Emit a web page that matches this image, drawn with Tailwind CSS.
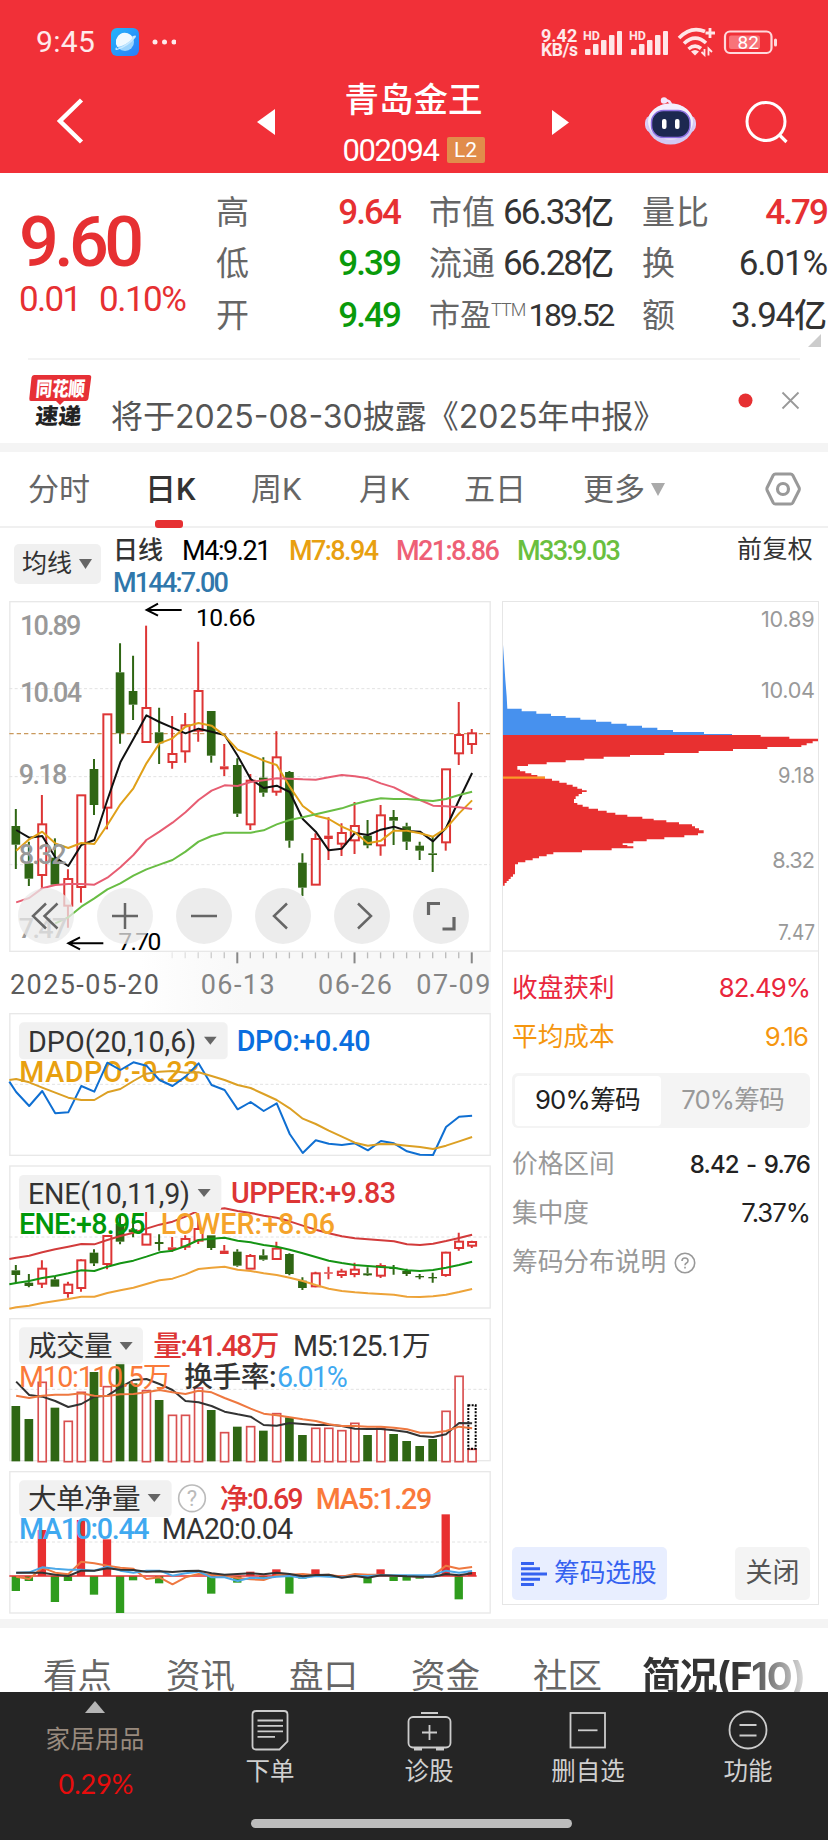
<!DOCTYPE html>
<html lang="zh-CN">

<head>
  <meta charset="UTF-8">
  <meta name="viewport" content="width=device-width, initial-scale=1.0">
  <title>青岛金王 002094</title>
  <script src="https://cdn.jsdelivr.net/npm/@tailwindcss/browser@4"></script>
</head>

<body class="w-[828px] h-[1840px] overflow-hidden bg-white font-['Roboto','Noto_Sans_CJK_SC',sans-serif] text-[#333]">
  <div class="flex flex-col w-[828px] h-[1840px]">

    <!-- Header -->
    <header class="h-[173px] shrink-0 bg-[#f13038] text-white">
      <!-- Status bar -->
      <div class="h-[83px] flex items-center pl-[36px] pr-[51px]">
        <span class="text-[30px] leading-none tracking-[0.300px] text-white/90 w-[75px]">9:45</span>
        <svg class="w-7 h-7" viewBox="0 0 28 28">
          <defs>
            <linearGradient id="app" x1="0" y1="0" x2="1" y2="1">
              <stop offset="0" stop-color="#25b5fa" />
              <stop offset="1" stop-color="#2a7dfa" />
            </linearGradient>
          </defs>
          <rect width="28" height="28" rx="6" fill="url(#app)" />
          <circle cx="14" cy="14" r="9" fill="#9bd4fd" />
          <path d="M6.500 19A9 9 0 1 1 22 10Q16 17 6.500 19Z" fill="#eef9ff" />
          <path d="M21 8.500Q26.500 6 24.500 9.500Q17 19 6 22Q3 22.500 5.500 18.500Q4.500 21.500 8 20Q17 16 22 9.500Z" fill="#c7e9ff" />
        </svg>
        <svg class="w-6 h-2 ml-[13px]" viewBox="0 0 24 8" fill="#fff" fill-opacity=".9">
          <circle cx="3" cy="4" r="2.500" /><circle cx="12.500" cy="4" r="2.500" /><circle cx="22" cy="4" r="2.500" />
        </svg>
        <div class="ml-auto flex items-center text-white/90">
          <div class="w-[42px] font-bold text-[18px] leading-[15px] pt-[3px]">
            <div>9.42</div>
            <div class="text-[17.5px] tracking-[-0.300px]">KB/s</div>
          </div>
          <svg class="w-[94px] h-[28px]" viewBox="583 27 94 28" fill="#ffe6e8">
            <text x="583" y="38.500" font-size="12.500" font-weight="700">HD</text>
            <text x="629" y="38.500" font-size="12.500" font-weight="700">HD</text>
            <g id="signal">
              <rect x="585" y="48" width="5.500" height="6" rx="1" />
              <rect x="593" y="43" width="5.500" height="11" rx="1" />
              <rect x="601" y="39" width="5.500" height="15" rx="1" />
              <rect x="609" y="34" width="5.500" height="20" rx="1" />
              <rect x="617" y="30" width="5" height="24" rx="1" />
            </g>
            <use href="#signal" x="46" />
          </svg>
          <svg class="w-[42px] h-[30px]" viewBox="677 27 42 30" fill="none" stroke="#ffe6e8" stroke-width="3.600">
            <path d="M679 38Q691 25.500 705 31.500" />
            <path d="M684 43.500Q695 33 706 43" />
            <path d="M688.500 49Q695 43.500 701 48.500" />
            <path d="M691 51.500Q695 48.500 699 51.500L695 55.500Z" fill="#ffe6e8" stroke="none" />
            <path d="M710 28V38M705.500 33H715" stroke-width="2.800" />
            <path d="M704.500 49V55L701.500 52M708.500 55.500V48.500L712 52" stroke-width="1.800" />
          </svg>
          <svg class="w-[58px] h-[28px]" viewBox="719 27.500 58 28">
            <rect x="725" y="31" width="46.500" height="21.500" rx="5" fill="none" stroke="#ffd9dc" stroke-width="2.200" />
            <rect x="729" y="35" width="31" height="13.500" rx="2" fill="#f87379" />
            <rect x="774" y="38" width="3" height="8" rx="1.500" fill="#ffd9dc" />
            <text x="737.500" y="48.500" font-size="19" fill="#fff">82</text>
          </svg>
        </div>
      </div>
      <!-- Title bar -->
      <div class="h-[90px] flex items-start">
        <svg class="w-[257px] h-[90px]" viewBox="0 83 257 90" fill="none" stroke="#fff" stroke-width="4.500">
          <path d="M81.500 100L60 121L81.500 142" />
        </svg>
        <svg class="w-[18px] h-[26px] mt-[26px]" viewBox="0 0 18 26" fill="#fff"><path d="M0 13L18 0V26Z" /></svg>
        <div class="flex-1 flex flex-col items-center">
          <div class="text-[34.500px] leading-[36px] font-medium mt-[-1px]">青岛金王</div>
          <div class="flex items-center mt-[16px]">
            <span class="text-[31px] leading-[30px] pt-[2px] tracking-[-1.400px] w-[104px]">002094</span>
            <span class="w-[38px] h-[26px] bg-[#e18c4b] rounded-[2px] text-[21px] leading-[27px] text-center">L2</span>
          </div>
        </div>
        <svg class="w-[17px] h-[25px] mt-[27px]" viewBox="0 0 17 25" fill="#fff"><path d="M0 0L17 12.500L0 25Z" /></svg>
        <svg class="w-[259px] h-[90px]" viewBox="569 83 259 90">
          <path d="M664 100Q671 100 671 106" fill="none" stroke="#f3e6fb" stroke-width="2.500" />
          <circle cx="664" cy="100.500" r="3.200" fill="#f3e6fb" />
          <rect x="645" y="115" width="51" height="18" rx="8" fill="#dccdf5" />
          <ellipse cx="670.500" cy="124" rx="23.500" ry="20.500" fill="#d3c9f3" />
          <ellipse cx="670.500" cy="121.500" rx="22.500" ry="18" fill="#f4effc" />
          <rect x="651.500" y="110.500" width="38.500" height="27" rx="12" fill="#1c2850" stroke="#8b6fe0" stroke-width="1.500" />
          <rect x="662" y="119" width="4.500" height="10" rx="2" fill="#fff" />
          <rect x="675" y="119" width="4.500" height="10" rx="2" fill="#fff" />
          <circle cx="766" cy="121.500" r="19" fill="none" stroke="#fff" stroke-width="3" />
          <path d="M779.500 135L786.500 142" stroke="#fff" stroke-width="3.200" />
        </svg>
      </div>
    </header>

    <!-- Quote -->
    <section class="h-[185px] shrink-0 flex pt-[13.500px]">
      <div class="w-[216px] pl-[19px] text-[#e63032]">
        <div class="text-[70px] leading-[70px] font-medium tracking-[-4.600px] pt-[20px]">9.60</div>
        <div class="flex text-[35px] leading-[36px] tracking-[-1.700px] mt-[5px]">
          <span class="w-[80px]">0.01</span><span class="tracking-[-1.500px]">0.10%</span>
        </div>
      </div>
      <div class="w-[184px] mr-[1px] text-[33px] leading-[51.500px] text-[#666]">
        <div class="flex justify-between">高<span class="text-[35px] tracking-[-1.900px] font-medium text-[#e63032]">9.64</span></div>
        <div class="flex justify-between">低<span class="text-[35px] tracking-[-1.900px] font-medium text-[#0a9a0a]">9.39</span></div>
        <div class="flex justify-between">开<span class="text-[35px] tracking-[-1.900px] font-medium text-[#0a9a0a]">9.49</span></div>
      </div>
      <div class="w-[185px] ml-[28px] text-[33px] leading-[51.500px] text-[#666] whitespace-nowrap">
        <div class="flex justify-between">市值<span class="flex text-[#333]"><span class="text-[35px] tracking-[-2px]">66.33</span><span class="font-medium">亿</span></span></div>
        <div class="flex justify-between">流通<span class="flex text-[#333]"><span class="text-[35px] tracking-[-2px]">66.28</span><span class="font-medium">亿</span></span></div>
        <div class="flex justify-between text-[31px]"><span class="flex">市盈<span class="text-[18px] leading-[39px] tracking-[-1px] font-light">TTM</span></span><span class="text-[32px] tracking-[-2.300px] pr-[1px] text-[#333]">189.52</span></div>
      </div>
      <div class="w-[185px] ml-[28px] mr-[1px] text-[33px] leading-[51.500px] text-[#666] whitespace-nowrap">
        <div class="flex justify-between"><span class="tracking-[1px]">量比</span><span class="text-[35px] tracking-[-1.900px] font-medium text-[#e63032]">4.79</span></div>
        <div class="flex justify-between">换<span class="text-[35px] tracking-[-1.100px] text-[#333]">6.01%</span></div>
        <div class="flex justify-between">额<span class="flex text-[#333]"><span class="text-[35px] tracking-[-1.300px]">3.94</span><span class="font-medium">亿</span></span></div>
        <svg class="w-[13px] h-[13px] ml-auto mr-[6px] mt-[-7px]" viewBox="0 0 13 13" fill="#ccc"><path d="M13 0V13H0Z" /></svg>
      </div>
    </section>

    <!-- Notice -->
    <section class="h-[85px] shrink-0 mx-[28px] border-t-2 border-[#f3f3f3] flex">
      <svg class="w-[66px] h-[60px] mt-[10px]" viewBox="28 370 66 60">
        <path d="M34 375H89Q91.500 375 91.200 377.500L88.500 398Q88 401 85.500 401H64L60 405L56 401H31Q29 401 29.300 398.500L31.500 377.500Q32 375 34 375Z" fill="#e63036" />
        <text x="36" y="396" font-size="20" font-weight="900" fill="#fff" textLength="49" lengthAdjust="spacingAndGlyphs" transform="skewX(-5) translate(34 0)">同花顺</text>
        <text x="36" y="424.500" font-size="22" font-weight="900" fill="#222" textLength="46" lengthAdjust="spacingAndGlyphs" transform="skewX(-5) translate(36 0)">速递</text>
      </svg>
      <div class="flex-1 pl-[17px] pt-[34px] text-[32px] leading-[46px] text-[#555] whitespace-nowrap font-['Inter','Noto_Sans_CJK_SC',sans-serif]">将于2025-08-30披露《2025年中报》</div>
      <svg class="w-[65px] h-[40px] mt-[20px]" viewBox="735 380 65 40">
        <circle cx="745.500" cy="400.500" r="7" fill="#e63032" />
        <path d="M782.500 392.500L798.500 408.500M798.500 392.500L782.500 408.500" stroke="#999" stroke-width="1.800" />
      </svg>
    </section>
    <div class="h-[9px] shrink-0 bg-[#f4f4f4]"></div>

    <!-- Period tabs -->
    <nav class="h-[76px] shrink-0 border-b-2 border-[#f0f0f0] flex items-start pt-[15px] pl-[28px] text-[31px] leading-[46px] text-[#666] whitespace-nowrap">
      <span class="w-[117px]">分时</span>
      <span class="w-[106px] font-medium text-[#333]">
        日K
        <span class="block w-[28px] h-[8px] mt-[7px] ml-[10px] rounded-[3px] bg-[#e63032]"></span>
      </span>
      <span class="w-[108px]">周K</span>
      <span class="w-[105px]">月K</span>
      <span class="w-[119px]">五日</span>
      <span class="w-[68px]">更多</span>
      <svg class="w-[14px] h-[13px] mt-[16px]" viewBox="0 0 14 13" fill="#aaa"><path d="M0 0H14L7 13Z" /></svg>
      <svg class="w-[36px] h-[34px] ml-[100px] mt-[5px]" viewBox="765 472 36 34" fill="none" stroke="#999" stroke-width="3">
        <path d="M775.500 474H790.500Q792 474 792.800 475.300L799 487.500Q799.700 489 799 490.500L792.800 502.700Q792 504 790.500 504H775.500Q774 504 773.200 502.700L767.200 490.500Q766.500 489 767.200 487.500L773.200 475.300Q774 474 775.500 474Z" />
        <circle cx="783" cy="489" r="5.500" stroke-width="3.200" />
      </svg>
    </nav>

    <!-- Moving averages -->
    <section class="h-[74px] shrink-0 flex pl-[14px] pr-[15px]">
      <div class="w-[87px] h-[40px] mt-[16px] rounded-[5px] bg-[#f0f0f0] flex items-center pl-[8px] text-[25px]">
        均线<svg class="w-[13px] h-[10px] ml-[7px]" viewBox="0 0 13 10" fill="#666"><path d="M0 0H13L6.500 10Z" /></svg>
      </div>
      <div class="flex-1 pl-[12px] pt-[7px] text-[27px] leading-[32px] tracking-[-1.600px] font-medium whitespace-nowrap">
        <div class="flex">
          <span class="w-[69px] text-[25px] tracking-normal">日线</span>
          <span class="w-[107px] text-black font-normal tracking-[-1.400px]">M4:9.21</span>
          <span class="w-[107px] text-[#e8a010]">M7:8.94</span>
          <span class="w-[121px] text-[#ee6076]">M21:8.86</span>
          <span class="text-[#6abf3f]">M33:9.03</span>
        </div>
        <div class="text-[#2f77ab] tracking-[-1.800px]">M144:7.00</div>
      </div>
      <div class="text-[25px] leading-[32px] pt-[6px] tracking-[0.300px]">前复权</div>
    </section>

    <!-- Charts -->
    <section class="h-[1017px] shrink-0 flex">
      <div class="w-[500px] flex flex-col relative">

        <!-- K line -->
        <svg class="w-[500px] h-[411px] overflow-visible" viewBox="0 36 1500 1233" font-size="81">
          <defs>
            <linearGradient id="fade" x1="0" x2="1">
              <stop offset="0" stop-color="#f6f6f6" stop-opacity="0" />
              <stop offset=".3" stop-color="#f8f8f8" />
            </linearGradient>
          </defs>
          <rect x="420" y="1086" width="1052" height="183" fill="url(#fade)" />
          <rect x="29.500" y="35" width="1441" height="1049" fill="#fff" stroke="#e8e8e8" stroke-width="4" />
          <path d="M28 296H1470M28 560H1470M28 824H1470" stroke="#e2e2e2" stroke-width="3" stroke-dasharray="9 7" />
          <path d="M28 431H1470" stroke="#c9995c" stroke-width="3.500" stroke-dasharray="13 9" />
          <g id="k-candles"></g>
          <g id="k-lines"></g>
          <g id="k-ticks"></g>
          <g fill="#999" font-weight="500">
            <text x="60" y="134" textLength="184">10.89</text>
            <text x="60" y="336" textLength="186">10.04</text>
            <text x="56" y="581" textLength="146">9.18</text>
            <text x="56" y="821" textLength="144">8.32</text>
            <text x="56" y="1044" textLength="146">7.47</text>
          </g>
          <g fill="none" stroke="#000" stroke-width="6">
            <path d="M545 60H442M474 41L440 60L474 77" />
            <path d="M310 1060H207M240 1042L205 1060L240 1078" />
          </g>
          <text x="588" y="107" font-size="74" textLength="179">10.66</text>
          <text x="355" y="1080" font-size="74" textLength="129">7.70</text>
          <text x="30" y="1211" fill="#5c5c5c" textLength="447">2025-05-20</text>
          <g fill="#858585">
            <text x="602" y="1211" textLength="222">06-13</text>
            <text x="954" y="1211" textLength="222">06-26</text>
            <text x="1249" y="1211" textLength="222">07-09</text>
          </g>
        </svg>

        <!-- Chart controls -->
        <div class="absolute left-[17.500px] top-[285.500px] flex gap-[23px]">
          <button class="w-14 h-14 rounded-full bg-[#eaeaea]/75 flex items-center justify-center">
            <svg class="w-8 h-8" viewBox="0 0 32 32" fill="none" stroke="#666" stroke-width="2.500"><path d="M16 3.500L3 16L16 28.500M27.500 3.500L14.500 16L27.500 28.500" /></svg>
          </button>
          <button class="w-14 h-14 rounded-full bg-[#eaeaea]/75 flex items-center justify-center">
            <svg class="w-8 h-8" viewBox="0 0 32 32" stroke="#666" stroke-width="2.500"><path d="M3 16H29M16 3V29" /></svg>
          </button>
          <button class="w-14 h-14 rounded-full bg-[#eaeaea]/90 flex items-center justify-center">
            <svg class="w-8 h-8" viewBox="0 0 32 32" stroke="#666" stroke-width="2.500"><path d="M3 16H29" /></svg>
          </button>
          <button class="w-14 h-14 rounded-full bg-[#eaeaea]/90 flex items-center justify-center">
            <svg class="w-8 h-8" viewBox="0 0 32 32" fill="none" stroke="#666" stroke-width="2.500"><path d="M20 3.500L7 16L20 28.500" /></svg>
          </button>
          <button class="w-14 h-14 rounded-full bg-[#eaeaea]/90 flex items-center justify-center">
            <svg class="w-8 h-8" viewBox="0 0 32 32" fill="none" stroke="#666" stroke-width="2.500"><path d="M12 3.500L25 16L12 28.500" /></svg>
          </button>
          <button class="w-14 h-14 rounded-full bg-[#eaeaea]/90 flex items-center justify-center">
            <svg class="w-8 h-8" viewBox="0 0 32 32" fill="none" stroke="#666" stroke-width="3.200"><path d="M15 3.500H3.500V15M29 17V29H17.500" /></svg>
          </button>
        </div>

        <!-- DPO -->
        <svg class="w-[500px] h-[152px]" viewBox="0 39 1500 456" font-size="86" font-weight="500">
          <rect x="29.500" y="41" width="1441" height="425" fill="none" stroke="#e8e8e8" stroke-width="4" />
          <path d="M28 253H1470" stroke="#e2e2e2" stroke-width="3" stroke-dasharray="9 7" />
          <text x="58" y="245" fill="#e8a010" textLength="541">MADPO:-0.23</text>
          <g id="dpo-lines"></g>
          <rect x="57" y="67" width="626" height="111" rx="14" fill="#f1f1f1" />
          <text x="84" y="155" fill="#333" font-weight="400" textLength="505">DPO(20,10,6)</text>
          <path d="M612 110H650L631 134Z" fill="#666" />
          <text x="710" y="153" fill="#0a6ede" textLength="402">DPO:+0.40</text>
        </svg>

        <!-- ENE -->
        <svg class="w-[500px] h-[153px]" viewBox="0 495 1500 459" font-size="86" font-weight="500">
          <rect x="29.500" y="498" width="1441" height="426" fill="none" stroke="#e8e8e8" stroke-width="4" />
          <path d="M28 711H1470" stroke="#e2e2e2" stroke-width="3" stroke-dasharray="9 7" />
          <g id="ene-candles"></g>
          <g id="ene-lines"></g>
          <rect x="57" y="525" width="607" height="111" rx="14" fill="#f1f1f1" />
          <text x="84" y="612" fill="#333" font-weight="400" textLength="486">ENE(10,11,9)</text>
          <path d="M593 567H632L612 591Z" fill="#666" />
          <text x="693" y="609" fill="#dd3535" textLength="495">UPPER:+9.83</text>
          <text x="57" y="702" fill="#00980a" textLength="380">ENE:+8.95</text>
          <text x="482" y="702" fill="#f5a32a" textLength="523">LOWER:+8.06</text>
        </svg>

        <!-- Volume -->
        <svg class="w-[500px] h-[153px]" viewBox="0 54 1500 459" font-size="86" font-weight="500">
          <rect x="29.500" y="56" width="1441" height="426" fill="none" stroke="#e8e8e8" stroke-width="4" />
          <path d="M28 268H1470" stroke="#e2e2e2" stroke-width="3" stroke-dasharray="9 7" />
          <g id="vol-bars"></g>
          <g id="vol-lines"></g>
          <rect x="57" y="82" width="372" height="111" rx="14" fill="#f1f1f1" fill-opacity=".95" />
          <text x="84" y="169" fill="#333" font-weight="400" textLength="254">成交量</text>
          <path d="M359 126H398L378 150Z" fill="#666" />
          <text x="460" y="169" fill="#dd3535" textLength="378">量:41.48万</text>
          <text x="879" y="169" fill="#333" font-weight="400" textLength="413">M5:125.1万</text>
          <text x="57" y="260" fill="#fa7a3a" font-weight="400" textLength="457">M10:110.5万</text>
          <text x="553" y="260" fill="#333" textLength="277">换手率:</text>
          <text x="831" y="260" fill="#3fa9f0" font-weight="400" textLength="212">6.01%</text>
        </svg>

        <!-- Net large orders -->
        <svg class="w-[500px] h-[148px]" viewBox="0 513 1500 444" font-size="86" font-weight="500">
          <rect x="29.500" y="515" width="1441" height="424" fill="none" stroke="#e8e8e8" stroke-width="4" />
          <path d="M28 726H1470" stroke="#e2e2e2" stroke-width="3" stroke-dasharray="9 7" />
          <g id="net-bars"></g>
          <path d="M28 828H1430" stroke="#e63032" stroke-width="5" />
          <g id="net-lines"></g>
          <rect x="57" y="541" width="458" height="110" rx="14" fill="#f1f1f1" />
          <text x="84" y="627" fill="#333" font-weight="400" textLength="338">大单净量</text>
          <path d="M443 582H482L463 606Z" fill="#666" />
          <circle cx="576" cy="595" r="40" fill="none" stroke="#bbb" stroke-width="5" />
          <text x="576" y="619" font-size="66" font-weight="400" fill="#bbb" text-anchor="middle">?</text>
          <text x="659" y="626" fill="#dd3535" textLength="252">净:0.69</text>
          <text x="947" y="626" fill="#fa7a3a" textLength="350">MA5:1.29</text>
          <text x="57" y="717" fill="#3fa9f0" textLength="392">MA10:0.44</text>
          <text x="485" y="717" fill="#333" font-weight="400" textLength="394">MA20:0.04</text>
        </svg>
      </div>

      <!-- Chip distribution -->
      <div class="w-[317px] h-[1004px] ml-[2px] mt-[-1px] border border-[#e6e6e6] flex flex-col font-['Inter','Noto_Sans_CJK_SC',sans-serif] text-[25.700px]">
        <svg class="w-[315px] h-[348px] shrink-0" viewBox="39 37 945 1044">
          <g id="chips"></g>
          <g font-size="65" fill="#999">
            <text x="813" y="113" textLength="161">10.89</text>
            <text x="813" y="325" textLength="162">10.04</text>
            <text x="864" y="581" textLength="110" lengthAdjust="spacingAndGlyphs">9.18</text>
            <text x="847" y="836" textLength="128">8.32</text>
            <text x="864" y="1050" textLength="111" lengthAdjust="spacingAndGlyphs">7.47</text>
          </g>
        </svg>
        <div class="flex-1 border-t-2 border-[#f1f1f1] pl-[9px] pr-[8px] flex flex-col text-[#999]">
          <div class="h-[49px] mt-[12px] flex items-center justify-between text-[#e9263c]">收盘获利<span class="tracking-[-0.900px]">82.49%</span></div>
          <div class="h-[49px] flex items-center justify-between text-[#f5960f]">平均成本<span class="tracking-[-0.900px] pr-[2px]">9.16</span></div>
          <div class="h-[55px] mt-[11px] shrink-0 rounded-[6px] bg-[#f4f4f4] p-[2.500px] flex items-center">
            <span class="w-[146px] h-[50px] rounded-[4px] bg-white text-[#222] flex items-center justify-center tracking-[-0.700px]">90%筹码</span>
            <span class="flex-1 text-center tracking-[-0.900px] pr-[3px]">70%筹码</span>
          </div>
          <div class="h-[49px] mt-[12px] flex items-center justify-between">价格区间<span class="text-[#222] font-medium text-[24px] tracking-[-0.900px] [word-spacing:2px]">8.42 - 9.76</span></div>
          <div class="h-[49px] flex items-center justify-between">集中度<span class="text-[#222] tracking-[-1px]">7.37%</span></div>
          <div class="h-[49px] flex items-center">筹码分布说明
            <svg class="w-[22px] h-[22px] ml-[8px]" viewBox="0 0 22 22" fill="none" stroke="#999" stroke-width="1.600">
              <circle cx="11" cy="11" r="9.700" />
              <path d="M8 9Q8 6 11 6Q14 6 14 8.700Q14 10.200 12.500 11Q11 11.800 11 13.300M11 14.700V16.500" />
            </svg>
          </div>
          <div class="mt-auto mb-[4px] h-[53px] flex justify-between">
            <div class="w-[155px] rounded-[5px] bg-[#e8eeff] text-[#3562f0] flex items-center pl-[9px]">
              <svg class="w-[26px] h-[26px] mr-[7px]" viewBox="0 0 26 26" stroke="#3562f0" stroke-width="3"><path d="M0 2.500H13M0 7.800H19M0 13H26M0 18.300H19M0 23.500H13" /></svg>筹码选股
            </div>
            <div class="w-[75px] rounded-[5px] bg-[#f4f4f4] text-[#555] text-[27px] flex items-center justify-center pb-[1px]">关闭</div>
          </div>
        </div>
      </div>
    </section>
    <div class="h-[9px] shrink-0 bg-[#f4f4f4]"></div>

    <!-- Info tabs -->
    <nav class="h-[64px] shrink-0 overflow-hidden flex pl-[43px] pt-[23px] text-[34.500px] leading-[50px] text-[#666] whitespace-nowrap">
      <span class="w-[123px]">看点</span>
      <span class="w-[123px]">资讯</span>
      <span class="w-[122px]">盘口</span>
      <span class="w-[122px]">资金</span>
      <span class="w-[109px]">社区</span>
      <span class="text-[38.500px] font-bold font-['Inter','Noto_Sans_CJK_SC',sans-serif] tracking-[-1.200px] text-transparent bg-clip-text bg-linear-to-r from-[#333] from-60% to-[#ddd]">简况(F10)</span>
    </nav>

    <!-- Bottom bar -->
    <footer class="h-[148px] shrink-0 bg-[#252525] text-[#d0d0d0] text-[24.500px] relative">
      <div class="flex">
        <div class="w-[190px] flex flex-col items-center pt-[9px]">
          <svg class="w-[20px] h-[12px]" viewBox="0 0 20 12" fill="#b5b5b5"><path d="M0 12L10 0L20 12Z" /></svg>
          <span class="leading-[36px] mt-[9px] text-[#988a7e] tracking-[0.300px]">家居用品</span>
          <span class="leading-[36px] mt-[8px] ml-[2px] text-[#e80c0c] font-['Lato',sans-serif] text-[27px]">0.29%</span>
        </div>
        <div class="w-[160px] flex flex-col items-center pt-[17px]">
          <svg class="w-[40px] h-[44px]" viewBox="250 1709 40 44" fill="none" stroke="#ccc" stroke-width="1.800">
            <path d="M256 1711H284Q287.500 1711 287.500 1714.500V1741.500L279.500 1749.500H256Q252.500 1749.500 252.500 1746V1714.500Q252.500 1711 256 1711Z" />
            <path d="M257.500 1720.500H283M257.500 1725.800H283M257.500 1731.300H283M257.500 1736.800H275" />
          </svg>
          <span class="leading-[38px]">下单</span>
        </div>
        <div class="w-[158px] flex flex-col items-center pt-[17px]">
          <svg class="w-[46px] h-[44px]" viewBox="406 1709 46 44" fill="none" stroke="#ccc" stroke-width="1.800">
            <rect x="408.500" y="1717" width="42" height="30.500" rx="4.500" />
            <path d="M421 1713H438M429.500 1725V1740M422 1732.500H437" />
            <path d="M414 1749H422M436 1749H444" stroke-width="3" />
          </svg>
          <span class="leading-[38px]">诊股</span>
        </div>
        <div class="w-[160px] flex flex-col items-center pt-[17px]">
          <svg class="w-[40px] h-[44px]" viewBox="569 1709 40 44" fill="none" stroke="#ccc" stroke-width="1.800">
            <rect x="571.500" y="1713" width="34.500" height="34.500" />
            <path d="M579 1730.300H598.500" />
          </svg>
          <span class="leading-[38px]">删自选</span>
        </div>
        <div class="w-[160px] flex flex-col items-center pt-[17px]">
          <svg class="w-[40px] h-[44px]" viewBox="728.500 1709 40 44" fill="none" stroke="#ccc" stroke-width="1.800">
            <circle cx="748.500" cy="1730" r="18.500" />
            <path d="M740 1725H757M740 1735.500H757" />
          </svg>
          <span class="leading-[38px]">功能</span>
        </div>
      </div>
      <div class="absolute left-[251px] bottom-[12px] w-[321px] h-[9px] rounded-full bg-[#bdbdbd]"></div>
    </footer>
  </div>

  <script>
    const RED = '#dd3535', GREEN = '#2f6614'
    const cx = i => 47.5 + 39.08 * i
    const put = (id, html) => { document.getElementById(id).innerHTML += html }

    // rows: [color, high, top, bottom, low]
    function candles(id, rows) {
      put(id, rows.map(([c, h, t, b, l], i) => {
        const x = cx(i), col = c === 'r' ? RED : GREEN
        let s = `<path d="M${x} ${h}V${t}M${x} ${b}V${l}" stroke="${col}" stroke-width="6"/>`
        if (c === 'r' && b - t > 11) s += `<rect x="${x - 11}" y="${t + 1}" width="24" height="${b - t - 2}" fill="#fff" stroke="${col}" stroke-width="6"/>`
        else s += `<rect x="${x - 13}" y="${t}" width="26" height="${Math.max(b - t, 4)}" fill="${col}"/>`
        return s
      }).join(''))
    }

    function line(id, ys, color, start = 0, lead) {
      const pts = ys.map((y, i) => `${(cx(i + start) + 1).toFixed(1)},${y}`)
      if (lead) pts.unshift(`28,${lead}`)
      put(id, `<polyline points="${pts.join(' ')}" fill="none" stroke="${color}" stroke-width="6" stroke-linejoin="round"/>`)
    }

    candles('k-candles', [
      ['g', 657, 708, 764, 837], ['g', 755, 820, 866, 888], ['r', 615, 702, 856, 893], ['g', 745, 803, 884, 884],
      ['r', 838, 866, 948, 1013], ['r', 615, 615, 892, 938], ['g', 507, 537, 645, 675], ['r', 372, 372, 654, 718],
      ['g', 160, 247, 430, 461], ['g', 197, 303, 344, 390], ['r', 107, 353, 457, 457], ['g', 353, 427, 460, 522],
      ['r', 378, 491, 517, 536], ['r', 369, 405, 485, 518], ['r', 155, 302, 423, 455], ['g', 363, 363, 497, 518],
      ['r', 462, 529, 538, 558], ['g', 505, 525, 671, 681], ['r', 552, 571, 704, 720], ['g', 502, 563, 608, 620],
      ['r', 424, 501, 606, 617], ['g', 543, 546, 752, 773], ['g', 790, 818, 893, 918], ['r', 730, 746, 885, 885],
      ['r', 682, 737, 747, 810], ['r', 700, 728, 762, 798], ['r', 636, 707, 752, 792], ['g', 690, 737, 766, 775],
      ['r', 645, 675, 767, 797], ['g', 660, 681, 692, 765], ['g', 698, 709, 755, 780], ['g', 755, 767, 782, 810],
      ['g', 740, 790, 795, 846], ['r', 537, 537, 758, 782], ['r', 336, 434, 491, 525], ['r', 417, 429, 463, 492]
    ])
    line('k-lines', [720, 743, 738, 802, 828, 765, 750, 630, 517, 447, 376, 396, 413, 430, 416, 425, 435, 497, 567, 594, 587, 606, 687, 725, 781, 776, 729, 735, 719, 710, 723, 725, 754, 714, 630, 549], '#111')
    line('k-lines', [782, 748, 725, 760, 774, 759, 762, 705, 643, 595, 520, 460, 445, 410, 399, 407, 437, 479, 495, 512, 525, 590, 648, 677, 687, 710, 727, 760, 752, 722, 722, 730, 740, 715, 670, 631], '#e0a018')
    line('k-lines', [937, 924, 895, 885, 882, 882, 884, 863, 832, 795, 750, 725, 698, 667, 630, 602, 586, 588, 576, 571, 565, 566, 568, 569, 562, 555, 559, 565, 580, 592, 612, 630, 647, 649, 652, 657], '#e75d72')
    line('k-lines', [1000, 982, 950, 925, 898, 880, 857, 838, 824, 810, 785, 755, 738, 728, 728, 728, 721, 703, 690, 682, 673, 664, 655, 642, 632, 625, 627, 627, 630, 633, 627, 615, 605], '#69bd44', 3)

    for (let i = 12; i < 36; i++) {
      const major = i % 9 === 8
      put('k-ticks', `<path d="M${cx(i)} 1087V${major ? 1120 : 1105}" stroke="${major ? '#888' : '#bbb'}" stroke-width="${major ? 6 : 4}" opacity="${Math.min(1, (i - 10) / 7)}"/>`)
    }

    line('dpo-lines', [276, 318, 273, 340, 337, 258, 275, 188, 210, 187, 197, 240, 258, 230, 190, 255, 270, 328, 306, 333, 310, 402, 459, 421, 431, 435, 430, 451, 423, 430, 454, 464, 465, 381, 350, 347], '#0f6fd2', 0, 245)
    line('dpo-lines', [237, 247, 263, 278, 293, 300, 300, 277, 267, 243, 221, 215, 213, 218, 217, 228, 240, 255, 264, 282, 300, 325, 356, 372, 392, 410, 428, 437, 432, 433, 437, 441, 447, 437, 424, 411], '#dca024', 0, 240)

    candles('ene-candles', [
      ['g', 795, 811, 825, 850], ['g', 822, 848, 858, 862], ['r', 781, 805, 852, 864], ['g', 828, 838, 860, 860],
      ['r', 845, 853, 880, 893], ['r', 778, 780, 865, 875], ['g', 748, 758, 790, 798], ['r', 705, 707, 793, 808],
      ['g', 645, 672, 725, 733], ['g', 655, 688, 697, 712], ['r', 628, 702, 735, 735], ['g', 703, 726, 732, 752],
      ['r', 711, 742, 750, 756], ['r', 706, 716, 741, 750], ['r', 645, 686, 723, 732], ['g', 706, 706, 744, 750],
      ['r', 735, 752, 762, 762], ['g', 748, 755, 797, 800], ['r', 762, 767, 807, 807], ['g', 748, 766, 779, 782],
      ['r', 725, 745, 778, 780], ['g', 760, 762, 822, 826], ['g', 832, 842, 864, 870], ['r', 815, 819, 860, 862],
      ['r', 800, 817, 821, 838], ['r', 806, 814, 826, 834], ['r', 788, 808, 823, 832], ['g', 802, 820, 826, 828],
      ['r', 790, 797, 828, 834], ['g', 795, 803, 805, 824], ['g', 806, 813, 822, 828], ['g', 822, 828, 831, 838],
      ['g', 818, 831, 834, 848], ['r', 755, 757, 826, 830], ['r', 698, 724, 745, 752], ['r', 722, 725, 738, 744]
    ])
    line('ene-lines', [773, 767, 757, 748, 740, 732, 733, 720, 708, 698, 686, 674, 665, 650, 632, 629, 625, 633, 639, 647, 653, 664, 677, 689, 700, 709, 715, 718, 721, 724, 733, 735, 731, 723, 714, 704], '#d23b3b', 0, 777)
    line('ene-lines', [849, 843, 834, 828, 820, 811, 813, 800, 790, 782, 770, 757, 752, 738, 720, 716, 713, 722, 727, 735, 740, 749, 760, 771, 782, 789, 795, 798, 801, 803, 811, 813, 810, 803, 795, 785], '#149414', 0, 853)
    line('ene-lines', [922, 917, 909, 903, 897, 890, 890, 879, 871, 863, 852, 841, 836, 823, 807, 803, 800, 809, 813, 820, 825, 833, 843, 855, 866, 873, 877, 880, 882, 884, 890, 891, 889, 884, 876, 867], '#eda338', 0, 926)

    // volume bars: color and top edge, all standing on 484
    const vol = 'g318 g357 r247 g323 r364 r277 g216 r260 g185 g250 r272 g300 r346 r346 r264 g330 r398 g380 r380 g392 r341 g352 g405 r385 r385 r392 r370 g405 r385 g402 g423 g438 g417 r334 r229 r448'.split(' ')
    vol.forEach((v, i) => {
      const t = +v.slice(1), x = cx(i)
      put('vol-bars', v[0] === 'r'
        ? `<rect x="${x - 11}" y="${t}" width="24" height="${485 - t}" fill="#fff" stroke="#d95050" stroke-width="5"/>`
        : `<rect x="${x - 13}" y="${t}" width="26" height="${484 - t}" fill="${GREEN}"/>`)
    })
    put('vol-bars', '<rect x="1405" y="316" width="22" height="130" fill="none" stroke="#000" stroke-width="6" stroke-dasharray="6 4"/>')
    line('vol-lines', [245, 285, 290, 303, 321, 312, 290, 287, 262, 240, 237, 252, 270, 303, 307, 318, 335, 343, 350, 375, 377, 369, 372, 375, 374, 378, 386, 387, 387, 391, 396, 408, 411, 403, 369, 370], '#333')
    line('vol-lines', [287, 294, 287, 284, 284, 280, 287, 288, 283, 282, 277, 270, 277, 282, 272, 277, 294, 309, 326, 341, 346, 352, 358, 363, 373, 378, 378, 380, 380, 383, 388, 398, 398, 393, 380, 385], '#ee7840')

    // net order bars grow up or down from 828
    const net = { 0: 873, 1: 843, 2: 690, 3: 906, 4: 843, 5: 660, 6: 884, 7: 718, 8: 939, 9: 841, 11: 850, 15: 881, 17: 848, 18: 815, 19: 835, 20: 808, 21: 881, 22: 836, 23: 808, 27: 850, 28: 808, 29: 843, 30: 842, 31: 836, 33: 643, 34: 898, 35: 816 }
    for (const [i, y] of Object.entries(net)) {
      put('net-bars', `<rect x="${cx(+i) - 12.5}" y="${Math.min(y, 828)}" width="25" height="${Math.abs(y - 828)}" fill="${y < 828 ? '#e83030' : '#2f9c1d'}"/>`)
    }
    line('net-lines', [830, 837, 803, 818, 823, 785, 790, 797, 803, 806, 837, 832, 853, 832, 822, 824, 827, 834, 838, 840, 826, 824, 822, 826, 824, 830, 822, 824, 824, 828, 828, 830, 826, 797, 806, 801], '#ee7840')
    line('net-lines', [818, 817, 802, 806, 809, 809, 812, 800, 812, 818, 812, 812, 827, 820, 815, 832, 832, 843, 833, 835, 830, 828, 834, 828, 830, 832, 828, 828, 826, 826, 826, 826, 825, 812, 818, 813], '#4ba8e8')
    line('net-lines', [818, 818, 818, 824, 828, 812, 812, 805, 809, 810, 815, 814, 816, 813, 812, 820, 824, 822, 820, 823, 818, 822, 829, 825, 824, 833, 828, 833, 826, 827, 829, 830, 830, 822, 826, 820], '#333')

    // chip histogram: [y, right edge] steps
    const steps = (rows, end) => 'M38 ' + rows[0][0] + rows.map(([y, x]) => `V${y}H${x}`).join('') + `V${end}H38Z`
    const blue = [[357, 95], [365, 139], [372, 183], [379, 227], [384, 271], [390, 318], [396, 364], [402, 410], [408, 456], [414, 502], [421, 549], [427, 642], [433, 726]]
    const red = [[436, 812], [441, 898], [447, 985], [455, 968], [461, 950], [467, 934], [472, 832], [478, 729], [484, 626], [490, 523], [496, 420], [501, 341], [507, 283], [512, 227], [518, 170], [524, 114], [529, 82], [540, 90], [545, 106], [551, 124], [556, 142], [561, 165], [567, 186], [573, 208], [579, 230], [585, 248], [591, 262], [597, 276], [602, 290], [607, 276], [613, 266], [620, 257], [628, 252], [640, 262], [645, 278], [651, 296], [657, 324], [663, 350], [669, 376], [675, 412], [681, 457], [687, 491], [692, 529], [698, 567], [704, 606], [710, 615], [716, 627], [722, 641], [731, 624], [737, 583], [743, 523], [749, 470], [755, 430], [761, 398], [766, 412], [770, 430], [776, 365], [782, 276], [788, 190], [794, 170], [800, 147], [806, 128], [812, 106], [818, 84], [824, 75], [854, 69], [861, 62], [868, 56], [874, 50], [880, 44]]
    put('chips', `<path d="M38 150L41 195L46 270L50 320L52 358H38Z" fill="#4791ee"/>
      <path d="${steps(blue, 437)}" fill="#4791ee"/>
      <path d="${steps(red, 888)}" fill="#e83030"/>
      <path d="M38 564H165" stroke="#fa9a28" stroke-width="7"/>`)
  </script>
</body>

</html>
